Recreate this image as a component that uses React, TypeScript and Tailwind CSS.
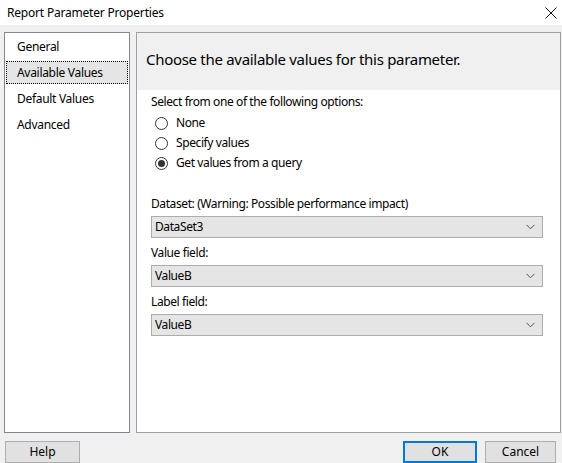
import React from 'react';

const font = { fontFamily: '"Segoe UI", "Noto Sans", sans-serif' };

function Radio({ label, checked }: { label: string; checked?: boolean }) {
    return (
        <div className="flex items-center h-[20px]">
            <div className="ml-[4px] w-[13px] h-[13px] rounded-full border border-[#333] bg-white flex items-center justify-center">
                {checked && <div className="w-[7px] h-[7px] rounded-full bg-[#333]" />}
            </div>
            <span className="ml-[8px] text-[12px] tracking-[-0.4px] text-black">{label}</span>
        </div>
    );
}

function Combo({ value }: { value: string }) {
    return (
        <div className="w-[392px] h-[22px] bg-[#e5e5e5] border border-[#acacac] flex items-center pl-[3px] pr-[7px]">
            <span className="text-[12px] tracking-[-0.4px] text-black">{value}</span>
            <svg className="ml-auto" width="9" height="6" viewBox="0 0 9 6">
                <path d="M0.5 0.8 L4.5 4.8 L8.5 0.8" fill="none" stroke="#555" strokeWidth="1" />
            </svg>
        </div>
    );
}

function Field({ label, value }: { label: string; value: string }) {
    return (
        <div className="mb-[7px]">
            <div className="h-[16px] leading-[16px] text-[12px] tracking-[-0.4px] text-black mb-[4px]">{label}</div>
            <Combo value={value} />
        </div>
    );
}

export default function App() {
    const items = ['General', 'Available Values', 'Default Values', 'Advanced'];
    return (
        <div className="w-[562px] h-[463px] bg-[#f0f0f0] flex flex-col overflow-hidden" style={font}>
            <div className="h-[25px] bg-white flex items-center pl-[7px] shrink-0">
                <span className="text-[12px] tracking-[-0.2px] text-black">Report Parameter Properties</span>
                <svg className="ml-auto mr-[5px]" width="12" height="12" viewBox="0 0 12 12">
                    <path d="M0.5 0.5 L11.5 11.5 M11.5 0.5 L0.5 11.5" stroke="#111" strokeWidth="1" />
                </svg>
            </div>
            <div className="flex mt-[7px] h-[401px]">
                <div className="ml-[4px] w-[126px] h-full bg-white border border-[#828790] pt-[2px]">
                    {items.map((item, index) => (
                        <div
                            key={index}
                            className={
                                index === 1
                                    ? 'mx-[1px] h-[23px] mb-[3px] flex items-center pl-[10px] bg-[#e5e5e5] border border-dotted border-black text-[12px] tracking-[-0.3px] text-black'
                                    : 'mx-[1px] h-[23px] mb-[3px] flex items-center pl-[10px] border border-transparent text-[12px] tracking-[-0.3px] text-black'
                            }
                        >
                            {item}
                        </div>
                    ))}
                </div>
                <div className="ml-[6px] w-[425px] h-full border border-[#a0a0a0] bg-white flex flex-col">
                    <div className="h-[57px] bg-[#f0f0f0] flex items-center pl-[9px] pb-[5px] shrink-0">
                        <span className="text-[15px] tracking-[-0.3px] text-black">
                            Choose the available values for this parameter.
                        </span>
                    </div>
                    <div className="pl-[14px] pt-[4px]">
                        <div className="h-[16px] leading-[16px] text-[12px] tracking-[-0.4px] text-black mb-[3px]">
                            Select from one of the following options:
                        </div>
                        <Radio label="None" />
                        <Radio label="Specify values" />
                        <Radio label="Get values from a query" checked />
                        <div className="mt-[23px]">
                            <Field label="Dataset: (Warning: Possible performance impact)" value="DataSet3" />
                            <Field label="Value field:" value="ValueB" />
                            <Field label="Label field:" value="ValueB" />
                        </div>
                    </div>
                </div>
            </div>
            <div className="flex mt-[8px]">
                <button className="ml-[5px] w-[75px] h-[22px] bg-[#e1e1e1] border border-[#adadad] text-[12px] text-black">
                    Help
                </button>
                <button className="ml-auto w-[74px] h-[22px] bg-[#e1e1e1] border-2 border-[#0078d7] text-[12px] text-black">
                    OK
                </button>
                <button className="ml-[8px] mr-[6px] w-[71px] h-[22px] bg-[#e1e1e1] border border-[#adadad] text-[12px] text-black">
                    Cancel
                </button>
            </div>
        </div>
    );
}
